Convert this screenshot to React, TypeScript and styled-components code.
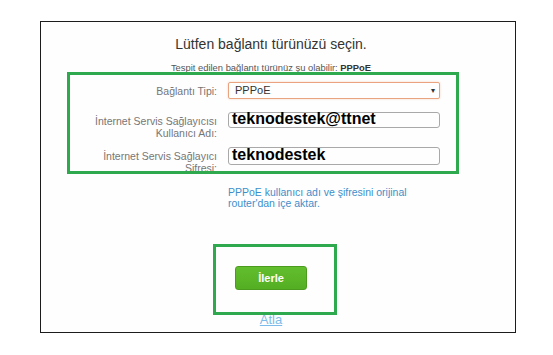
import styled, { createGlobalStyle } from "styled-components";

const GlobalStyle = createGlobalStyle`
  html, body {
    margin: 0;
    padding: 0;
    background: #fff;
    font-family: "Liberation Sans", Arial, sans-serif;
  }
`;

const Page = styled.div`
  width: 553px;
  height: 355px;
  padding: 21px 0 0 40px;
  box-sizing: border-box;
`;

const Frame = styled.div`
  position: relative;
  width: 476px;
  height: 312px;
  box-sizing: border-box;
  border: 1px solid #1c1c1c;
  background: #fefefe;
  padding: 14px 14px 0 0;
`;

const Title = styled.h1`
  margin: 0;
  font-size: 14px;
  line-height: 16px;
  font-weight: normal;
  color: #333;
  text-align: center;
`;

const Detected = styled.p`
  margin: 9.5px 0 0;
  font-size: 9.4px;
  line-height: 11px;
  color: #555;
  text-align: center;

  b {
    color: #333;
  }
`;

const Form = styled.div`
  margin-top: 9.5px;
`;

const Row = styled.div<{ $height: number }>`
  display: grid;
  grid-template-columns: 176px 212px;
  column-gap: 11px;
  align-items: start;
  height: ${({ $height }) => $height}px;
`;

const Label = styled.label`
  padding-top: 4px;
  font-size: 10.5px;
  line-height: 11.5px;
  color: #767676;
  text-align: right;
`;

const Select = styled.div`
  position: relative;
  height: 17px;
  box-sizing: border-box;
  border: 1px solid #e9a47f;
  border-radius: 2px;
  box-shadow: 0 0 2px rgba(233, 140, 90, 0.45);
  padding-left: 6px;
  font-size: 11px;
  line-height: 15px;
  color: #333;

  &::after {
    content: "▾";
    position: absolute;
    right: 4px;
    top: 0;
    font-size: 8px;
    color: #333;
  }
`;

const Field = styled.div<{ $height: number }>`
  height: ${({ $height }) => $height}px;
  box-sizing: border-box;
  border: 1px solid #a9a9a9;
  border-radius: 3px;
  padding-left: 3px;
  font-size: 16px;
  font-weight: bold;
  line-height: ${({ $height }) => $height - 4}px;
  color: #000;
  white-space: nowrap;
`;

const Note = styled.p`
  margin: 0 0 0 187px;
  width: 190px;
  font-size: 10.5px;
  line-height: 10.5px;
  color: #3d8fca;
`;

const Actions = styled.div`
  display: flex;
  flex-direction: column;
  align-items: center;
  margin-top: 58px;
`;

const NextButton = styled.button`
  width: 72px;
  height: 24px;
  border: 1px solid #4b9b1e;
  border-radius: 3px;
  background: linear-gradient(#63be2e, #54ae22);
  color: #fff;
  font-family: "Liberation Sans", Arial, sans-serif;
  font-size: 11px;
  font-weight: bold;
  padding: 0;
`;

const SkipLink = styled.a`
  margin-top: 22px;
  font-size: 13px;
  line-height: 15px;
  color: #7dbbea;
  text-decoration: underline;
`;

const Highlight = styled.div<{ $left: number; $top: number; $w: number; $h: number }>`
  position: absolute;
  left: ${({ $left }) => $left}px;
  top: ${({ $top }) => $top}px;
  width: ${({ $w }) => $w}px;
  height: ${({ $h }) => $h}px;
  box-sizing: border-box;
  border: 3px solid #2fa94e;
  pointer-events: none;
`;

export default function App() {
  return (
    <>
      <GlobalStyle />
      <Page>
        <Frame>
          <Title>Lütfen bağlantı türünüzü seçin.</Title>
          <Detected>
            Tespit edilen bağlantı türünüz şu olabilir: <b>PPPoE</b>
          </Detected>
          <Form>
            <Row $height={30}>
              <Label>Bağlantı Tipi:</Label>
              <Select>PPPoE</Select>
            </Row>
            <Row $height={35}>
              <Label>
                İnternet Servis Sağlayıcısı
                <br />
                Kullanıcı Adı:
              </Label>
              <Field $height={16}>teknodestek@ttnet</Field>
            </Row>
            <Row $height={40}>
              <Label>
                İnternet Servis Sağlayıcı
                <br />
                Şifresi:
              </Label>
              <Field $height={18}>teknodestek</Field>
            </Row>
          </Form>
          <Note>PPPoE kullanıcı adı ve şifresini orijinal router'dan içe aktar.</Note>
          <Actions>
            <NextButton>İlerle</NextButton>
            <SkipLink>Atla</SkipLink>
          </Actions>
          <Highlight $left={26} $top={50} $w={392} $h={102} />
          <Highlight $left={172} $top={222} $w={124} $h={71} />
        </Frame>
      </Page>
    </>
  );
}
